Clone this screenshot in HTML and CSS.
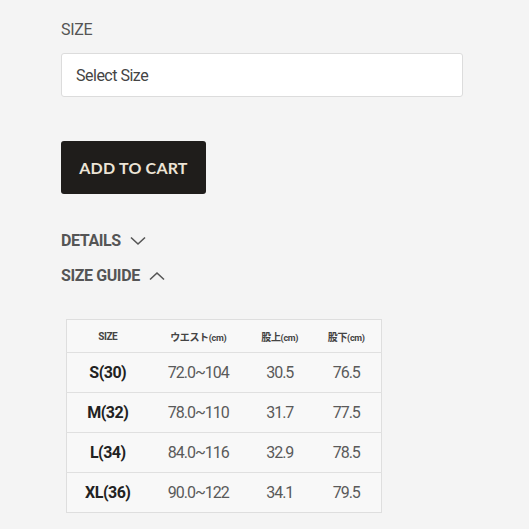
FILE: index.html
```html
<!DOCTYPE html>
<html lang="ja">
<head>
<meta charset="utf-8">
<link rel="stylesheet" href="styles.css">
</head>
<body>
<div class="page">
  <div class="label">SIZE</div>
  <div class="select">Select Size</div>
  <button class="cart">ADD TO CART</button>
  <div class="toggle toggle-details">DETAILS
    <svg class="chev" width="16" height="10" viewBox="0 0 16 10"><path d="M1 1.5 L8 8 L15 1.5" fill="none" stroke="#555" stroke-width="1.6"/></svg>
  </div>
  <div class="toggle toggle-guide">SIZE GUIDE
    <svg class="chev" width="16" height="10" viewBox="0 0 16 10"><path d="M1 8.5 L8 2 L15 8.5" fill="none" stroke="#555" stroke-width="1.6"/></svg>
  </div>
  <table class="guide">
    <thead>
      <tr><th class="c1">SIZE</th><th class="c2">ウエスト<span class="u">(cm)</span></th><th class="c3">股上<span class="u">(cm)</span></th><th class="c4">股下<span class="u">(cm)</span></th></tr>
    </thead>
    <tbody>
      <tr><td class="sz">S(30)</td><td>72.0~104</td><td>30.5</td><td>76.5</td></tr>
      <tr><td class="sz">M(32)</td><td>78.0~110</td><td>31.7</td><td>77.5</td></tr>
      <tr><td class="sz">L(34)</td><td>84.0~116</td><td>32.9</td><td>78.5</td></tr>
      <tr><td class="sz">XL(36)</td><td>90.0~122</td><td>34.1</td><td>79.5</td></tr>
    </tbody>
  </table>
</div>
</body>
</html>
```
FILE: styles.css
```css
html, body {
  margin: 0;
  padding: 0;
  background: #f4f4f4;
}
body {
  font-family: Roboto, "Noto Sans CJK JP", sans-serif;
  color: #555;
}
.page {
  padding: 20px 0 0 61px;
  width: 402px;
}
.label {
  font-size: 16px;
  line-height: 20px;
  color: #555;
  letter-spacing: -0.3px;
}
.select {
  margin-top: 13px;
  box-sizing: border-box;
  height: 44px;
  border: 1px solid #dcdcdc;
  border-radius: 3px;
  background: #fff;
  padding: 0 14px;
  font-size: 16px;
  line-height: 43px;
  color: #444;
  letter-spacing: -0.5px;
}
.cart {
  display: block;
  margin-top: 44px;
  width: 145px;
  height: 53px;
  border: none;
  border-radius: 3px;
  background: #1f1d1b;
  color: #ece4d6;
  font-family: Lato, sans-serif;
  font-weight: 700;
  font-size: 16px;
  letter-spacing: 0.2px;
  padding: 0;
}
.toggle {
  display: flex;
  align-items: center;
  font-size: 16px;
  font-weight: 700;
  letter-spacing: -0.4px;
  color: #555;
  line-height: 20px;
}
.toggle-details {
  margin-top: 37px;
}
.toggle-guide {
  margin-top: 15px;
}
.chev {
  margin-left: 9px;
}
.guide {
  margin: 33px 0 0 5px;
  border-collapse: collapse;
  border: 1px solid #dedede;
  background: #f8f8f8;
  width: 316px;
}
.guide th {
  height: 32px;
  font-size: 10px;
  font-weight: 700;
  color: #444;
  letter-spacing: -0.4px;
  border-bottom: 1px solid #e0e0e0;
  padding: 0;
}
.guide th .u {
  font-size: 9px;
  letter-spacing: -0.3px;
}
.guide td {
  height: 39px;
  text-align: center;
  font-size: 16px;
  color: #5a5a5a;
  letter-spacing: -1px;
  border-bottom: 1px solid #e0e0e0;
  padding: 0;
}
.guide tr:last-child td {
  border-bottom: none;
}
.guide td.sz {
  font-weight: 700;
  color: #222;
  letter-spacing: -0.5px;
}
.c1 { width: 82px; }
.c2 { width: 100px; }
.c3 { width: 64px; }
.c4 { width: 70px; }
```
